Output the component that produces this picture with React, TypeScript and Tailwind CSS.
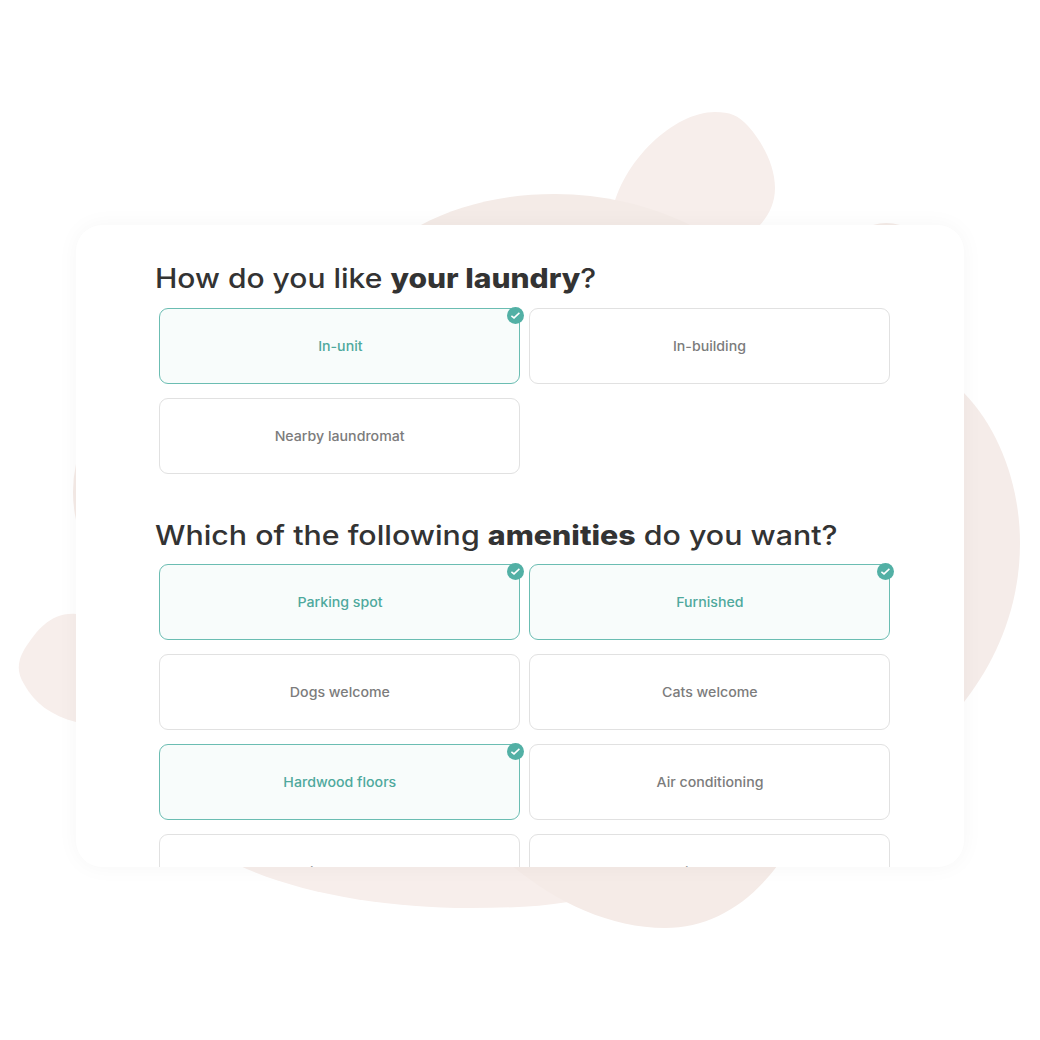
import type { ReactNode } from "react";

type Option = { label: string; selected?: boolean };

const laundry: Option[] = [
  { label: "In-unit", selected: true },
  { label: "In-building" },
  { label: "Nearby laundromat" },
];

const amenities: Option[] = [
  { label: "Parking spot", selected: true },
  { label: "Furnished", selected: true },
  { label: "Dogs welcome" },
  { label: "Cats welcome" },
  { label: "Hardwood floors", selected: true },
  { label: "Air conditioning" },
  { label: "Dishwasher" },
  { label: "Patio/Balcony" },
];

function Backdrop() {
  return (
    <svg className="absolute inset-0 h-full w-full" viewBox="0 0 1040 1040" aria-hidden="true">
      <path fill="#f7eeeb" d="M612 213C622 161 674 112 715 112C730 112 738 115 748 126C764 144 775 167 775 188C775 204 768 217 758 227L740 260H612Z" />
      <path fill="#f4ebe7" d="M419 226C460 204 507 194 555 194C602 194 650 205 690 225L720 260H400Z" />
      <path fill="#f4ebe7" d="M873 225Q886 221 900 225V240H873Z" />
      <path fill="#f5ece9" d="M964 393C1000 430 1020 487 1020 543C1020 603 999 657 964 702H900V393Z" />
      <path fill="#f7eeeb" d="M238 865C300 894 388 908 470 908C505 908 538 907 568 902L620 850H241Z" />
      <path fill="#f5ebe7" d="M511 865C557 903 611 928 665 928C709 928 748 905 777 866L760 840H520Z" />
      <path fill="#f7eeeb" d="M76 614C51 612 37 630 24 650C17 662 17 673 24 684C34 703 52 716 76 722H100V614Z" />
      <path fill="#f5ebe7" d="M76 464Q70 492 76 520H90V464Z" />
    </svg>
  );
}

function Badge() {
  return (
    <span className="absolute -top-[2px] -right-[5px] flex size-[17px] items-center justify-center rounded-full bg-[#52b0a5]">
      <svg className="size-[17px]" viewBox="0 0 17 17" fill="none" stroke="white" strokeWidth="1.5">
        <path d="M4.4 8.8L7 10.9L12.4 5.9" />
      </svg>
    </span>
  );
}

function OptionCard({ label, selected }: Option) {
  return (
    <button
      className={
        selected
          ? "relative flex h-[76px] items-center justify-center rounded-[9px] border border-[#6bbdb2] bg-[#f8fcfb] text-[#4fa99d]"
          : "relative flex h-[76px] items-center justify-center rounded-[9px] border border-[#e1e1e1] bg-white text-[#7c7c7c]"
      }
    >
      <span className="scale-x-[1.09] text-[13px] leading-5 font-medium">{label}</span>
      {selected && <Badge />}
    </button>
  );
}

function Question({ title, options }: { title: ReactNode; options: Option[] }) {
  return (
    <section>
      <h2 className="h-9 pl-px text-[27px] leading-9 font-medium whitespace-nowrap text-[#333333]">{title}</h2>
      <div className="mt-[10.6px] ml-[5px] grid w-[731px] grid-cols-2 gap-x-[9px] gap-y-[14px]">
        {options.map((option) => (
          <OptionCard key={option.label} {...option} />
        ))}
      </div>
    </section>
  );
}

export default function App() {
  return (
    <div className="relative h-[1040px] w-[1040px] overflow-hidden bg-white pt-[225px] pl-[76px] font-['Inter',sans-serif]">
      <Backdrop />
      <main className="relative h-[641.5px] w-[888px] rounded-[26px] bg-white shadow-[0_0_22px_rgba(0,0,0,0.04)]">
        <div className="flex h-full flex-col gap-[44.2px] overflow-hidden rounded-[26px] pt-[36px] pl-[78.4px]">
          <Question
            title={
              <span className="inline-block origin-left scale-x-[1.112]">
                How do you like <b className="font-extrabold">your laundry</b>?
              </span>
            }
            options={laundry}
          />
          <Question
            title={
              <span className="inline-block origin-left scale-x-[1.124]">
                Which of the following <b className="font-extrabold">amenities</b> do you want?
              </span>
            }
            options={amenities}
          />
        </div>
      </main>
    </div>
  );
}
